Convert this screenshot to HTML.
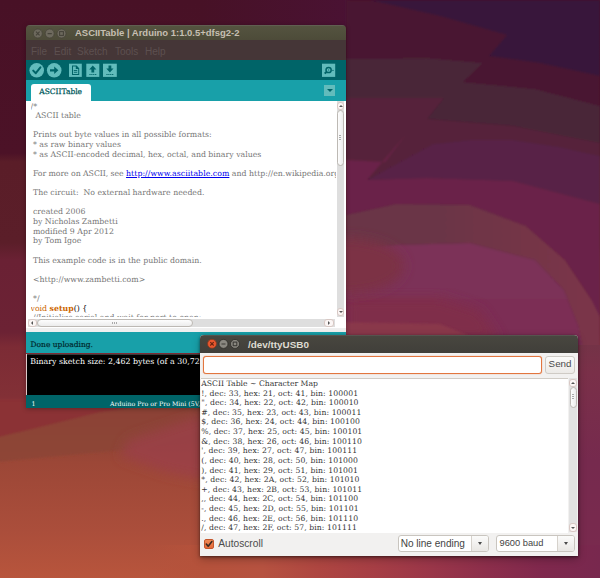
<!DOCTYPE html>
<html>
<head>
<meta charset="utf-8">
<title>ASCIITable | Arduino</title>
<style>
html,body{margin:0;padding:0;}
body{width:600px;height:578px;overflow:hidden;position:relative;background:#5a1c3c;font-family:"Liberation Sans","DejaVu Sans",sans-serif;}
#bg{position:absolute;left:0;top:0;width:600px;height:578px;}
.abs{position:absolute;}
/* ---------- Arduino window ---------- */
#ard{position:absolute;left:26px;top:25px;width:320px;height:383px;border-radius:4px 4px 0 0;overflow:hidden;box-shadow:0 1px 5px rgba(0,0,0,.28);}
#ard .title{position:absolute;left:0;top:0;width:320px;height:15.3px;background:linear-gradient(#66655a 0,#54533f 1.5px,#4d4b39 100%);}
#ard .title span{position:absolute;left:49px;top:2px;font:bold 9.47px/11px "Liberation Sans",sans-serif;color:#c6bfb2;white-space:nowrap;}
.wb{position:absolute;width:9px;height:9px;border-radius:50%;}
#ard .menu{position:absolute;left:0;top:15.3px;width:320px;height:19.7px;background:#453637;}
#ard .menu span{position:absolute;top:5.7px;font:10px/12px "Liberation Sans",sans-serif;color:#5d5050;white-space:nowrap;}
#ard .tool{position:absolute;left:0;top:35px;width:320px;height:20px;background:#006468;}
#ard .tabs{position:absolute;left:0;top:55px;width:320px;height:21px;background:#18a0a9;}
#ard .tab{position:absolute;left:5px;top:4px;width:60px;height:17px;background:#fff;border-radius:3px 3px 0 0;}
#ard .tab span{position:absolute;left:8.3px;top:3px;font:7.5px/10px "DejaVu Serif","Liberation Serif",serif;color:#00595c;white-space:nowrap;-webkit-text-stroke:.25px #00595c;}
#ard .ed{position:absolute;left:0;top:76px;width:320px;height:231px;background:#fff;}
#code{position:absolute;left:4.5px;top:0.6px;margin:0;font:7.8px/9.63px "DejaVu Serif","Liberation Serif",serif;color:#767676;white-space:pre;width:305px;height:215.5px;overflow:hidden;}
#code .k{color:#cc6600;}
#code .b{color:#cc6600;font-weight:bold;}
#code .n{color:#000;}
#code .u{color:#0000ee;text-decoration:underline;}
#ard .status{position:absolute;left:0;top:306.6px;width:320px;height:21.9px;background:#18a0a9;}
#ard .status span{position:absolute;left:4.6px;top:8px;font:7.5px/10px "DejaVu Serif","Liberation Serif",serif;color:#00292e;white-space:nowrap;-webkit-text-stroke:.2px #00292e;}
#ard .con{position:absolute;left:0;top:328.5px;width:320px;height:42px;background:#dcc9c9;}
#ard .con div{position:absolute;left:1.1px;top:0;width:318px;height:41.1px;background:#000;overflow:hidden;border-top:.6px solid #3a3a3a;}
#ard .con span{position:absolute;left:3.1px;top:2.8px;font:7.87px/10px "DejaVu Serif","Liberation Serif",serif;color:#fff;white-space:nowrap;}
#ard .foot{position:absolute;left:0;top:370.4px;width:320px;height:12.7px;background:#006468;}
#ard .foot span{position:absolute;top:4.3px;font:6.25px/8px "DejaVu Serif","Liberation Serif",serif;color:#fff;white-space:nowrap;}
/* ---------- Serial monitor ---------- */
#ser{position:absolute;left:200px;top:335px;width:378px;height:221px;border-radius:4px 4px 0 0;overflow:hidden;background:#f2f1f0;box-shadow:0 1px 3px rgba(0,0,0,.5),0 3px 9px rgba(0,0,0,.28);}
#ser .title{position:absolute;left:0;top:0;width:378px;height:17.6px;background:linear-gradient(#5c5b56 0,#48463f 1.5px,#403f3a 100%);}
#ser .title span{position:absolute;left:48px;top:3.5px;font:bold 9.9px/11px "Liberation Sans",sans-serif;color:#dfdbd2;white-space:nowrap;}
#ser .inp{position:absolute;left:3px;top:21.4px;width:337px;height:15.2px;border:1px solid #e2763f;border-radius:3px;background:#fff;box-shadow:0 0 1px #e2763f;}
#ser .send{position:absolute;left:345px;top:21px;width:28px;height:16px;border:1px solid #cfcbc5;border-radius:3px;background:linear-gradient(#fbfbfa,#eceae7);}
#ser .send span{position:absolute;left:2.6px;top:1.4px;font:9.8px/11px "Liberation Sans",sans-serif;color:#4a4a4a;}
#ser .ta{position:absolute;left:0.5px;top:42.5px;width:367px;height:154.3px;background:#fff;border-top:1px solid #d0ccc6;overflow:hidden;}
#out{position:absolute;left:0.8px;top:0.4px;margin:0;font:7.7px/9.63px "DejaVu Serif","Liberation Serif",serif;color:#383838;white-space:pre;}
#ser .lbl{position:absolute;left:18.2px;top:203.1px;font:10.2px/11px "Liberation Sans",sans-serif;color:#4c4c4c;}
.combo{position:absolute;top:200.2px;height:15px;border:1px solid #c9c5bf;border-radius:3px;background:#fff;overflow:hidden;}
.combo span{position:absolute;left:2.2px;top:1.6px;font:10.05px/11px "Liberation Sans",sans-serif;color:#444;white-space:nowrap;}
.combo i{position:absolute;right:0;top:0;width:16px;height:15px;background:linear-gradient(#fbfbfa,#e9e7e4);border-left:1px solid #d6d2cc;}
.combo i:after{content:"";position:absolute;left:6.2px;top:6.2px;border:2.7px solid transparent;border-top:3.3px solid #4a4a4a;border-bottom:0;}

#ard .dd{position:absolute;left:298.4px;top:5.3px;width:10.5px;height:10.3px;background:#62bcbc;}
#ard .dd:after{content:"";position:absolute;left:2.2px;top:3.8px;border:3px solid transparent;border-top:3.5px solid #006468;border-bottom:0;}
/* scrollbars */
.vtrack{position:absolute;background:#dedede;}
.thumb{position:absolute;background:linear-gradient(90deg,#fdfdfd,#ececec);border:1px solid #bdb9b4;border-radius:4px;box-sizing:border-box;}
.hthumb{position:absolute;background:linear-gradient(#fdfdfd,#ececec);border:1px solid #bdb9b4;border-radius:4px;box-sizing:border-box;}
.sbtn{position:absolute;background:#fbf6f5;border:1px solid #d8c8c4;border-radius:3px;box-sizing:border-box;}
.sbtn:after{content:"";position:absolute;}
.sbtn.up:after{left:1px;top:2px;border:2.2px solid transparent;border-bottom:2.8px solid #555;border-top:0;}
.sbtn.dn:after{left:1px;top:2.6px;border:2.2px solid transparent;border-top:2.8px solid #555;border-bottom:0;}
.sbtn.lf:after{left:2px;top:1.3px;border:2.2px solid transparent;border-right:2.8px solid #555;border-left:0;}
.sbtn.rt:after{left:3px;top:1.3px;border:2.2px solid transparent;border-left:2.8px solid #555;border-right:0;}
.grip{position:absolute;background:repeating-linear-gradient(#aaa 0 1px,transparent 1px 2px);}
.hgrip{position:absolute;background:repeating-linear-gradient(90deg,#aaa 0 1px,transparent 1px 2px);}
#ser .cb{position:absolute;left:4.3px;top:204.2px;width:10px;height:9.6px;border-radius:2px;background:linear-gradient(#ef8a56,#e46a38);border:1px solid #c4562c;box-sizing:border-box;}
</style>
</head>
<body>
<svg id="bg" width="600" height="578" viewBox="0 0 600 578">
<defs>
<linearGradient id="gl" x1="0" y1="0" x2="0" y2="1">
<stop offset="0" stop-color="#481126"/><stop offset="0.265" stop-color="#4c1227"/><stop offset="0.28" stop-color="#5a1d28"/><stop offset="0.42" stop-color="#5b1e29"/><stop offset="0.45" stop-color="#6a2134"/><stop offset="0.575" stop-color="#6c2234"/><stop offset="0.60" stop-color="#7c2b35"/><stop offset="0.685" stop-color="#823036"/><stop offset="0.70" stop-color="#8b3036"/><stop offset="0.72" stop-color="#8b3036"/><stop offset="0.76" stop-color="#8e4436"/><stop offset="0.80" stop-color="#9c4737"/><stop offset="0.92" stop-color="#ab4e3b"/><stop offset="1" stop-color="#b8553c"/>
</linearGradient>
<linearGradient id="gt" x1="0" y1="0" x2="1" y2="0">
<stop offset="0" stop-color="#471126"/><stop offset="1" stop-color="#4a1233"/>
</linearGradient>
<linearGradient id="gb" x1="0" y1="0" x2="1" y2="0">
<stop offset="0" stop-color="#b5523b" stop-opacity="0"/><stop offset="0.12" stop-color="#b5523b"/><stop offset="0.25" stop-color="#b65240"/><stop offset="0.375" stop-color="#ae4641"/><stop offset="0.5" stop-color="#a63e45"/><stop offset="0.625" stop-color="#9a3649"/><stop offset="0.75" stop-color="#8c2e4b"/><stop offset="0.875" stop-color="#7f284d"/><stop offset="1" stop-color="#78284e"/>
</linearGradient>
<linearGradient id="gr" x1="0" y1="0" x2="0" y2="1">
<stop offset="0" stop-color="#743347"/><stop offset="0.12" stop-color="#7a3049"/><stop offset="0.5" stop-color="#762a4e"/><stop offset="1" stop-color="#7a2a4e"/>
</linearGradient>
<linearGradient id="g7" gradientUnits="userSpaceOnUse" x1="440" y1="0" x2="580" y2="0"><stop offset="0" stop-color="#6b3447"/><stop offset="1" stop-color="#7a3448"/></linearGradient>
<clipPath id="cr"><rect x="340" y="-10" width="270" height="360"/></clipPath>
<filter id="bl" x="-5%" y="-5%" width="110%" height="110%"><feGaussianBlur stdDeviation="1.2"/></filter>
<filter id="bl2" x="-20%" y="-20%" width="140%" height="140%"><feGaussianBlur stdDeviation="6"/></filter>
</defs>
<rect width="600" height="578" fill="url(#gl)"/>
<rect x="200" y="0" width="150" height="26" fill="url(#gt)"/>
<g clip-path="url(#cr)"><g filter="url(#bl)">
<!-- right region bands -->
<path d="M346,0 L600,0 L600,578 L346,578 Z" fill="#4a1233"/>
<path d="M370,0 L440,16 L507,35 L489,56 L540,63 L600,76 L600,0 Z" fill="#38133a"/>
<path d="M346,59 L427,58 L483,63 L463,82 L535,89 L600,106 L600,146 L513,126 L427,119 L444,98 L346,98 Z" fill="#482637"/>
<path d="M346,98 L444,98 L427,119 L513,126 L600,143 L600,156 L560,147 L513,140 L470,140 L433,144 L367,180 L346,180 Z" fill="#56213a"/>
<path d="M367,180 L433,144 L470,140 L513,140 L560,147 L600,156 L600,204 L513,181 L427,178 Z" fill="#582347"/>
<path d="M346,160 L385,162 L407,133 L367,180 L427,178 L513,181 L600,204 L600,340 L591,299 L565,260 L526,226 L470,205 L396,204 L346,215 Z" fill="#6a2148"/>
<path d="M346,215 L396,204 L470,205 L526,226 L565,260 L591,299 L600,317 L600,350 L583,350 L578,325 L564,290 L535,260 L470,243 L396,245 L346,250 Z" fill="url(#g7)"/>
<path d="M346,250 L396,245 L470,243 L535,260 L564,290 L578,325 L583,350 L346,350 Z" fill="#7c3258"/>
<path d="M346,299 L567,299 L578,325 L583,350 L346,350 Z" fill="#7b2e54"/>
</g></g>
<path d="M346,297 L440,297 L480,310 L500,340 L346,340 Z" fill="#802d4a" filter="url(#bl2)" opacity=".9"/>
<path d="M340,322 L440,324 L480,340 L340,340 Z" fill="#8c3a4c" filter="url(#bl)" opacity=".8"/>
<ellipse cx="346" cy="266" rx="58" ry="28" fill="#7c3244" filter="url(#bl2)"/>
<g filter="url(#bl)">
<path d="M-5,400 L210,400 L210,396 L100,412 L-5,438 Z" fill="#8b3036"/>
<path d="M-5,438 L100,412 L210,396 L210,440 L120,450 L-5,462 Z" fill="#8c4435" opacity="0.85"/>
</g>
<path d="M128,440 L205,414 L205,480 L165,472 L120,456 Z" fill="#9b4148" filter="url(#bl2)" opacity="0.8"/>
<rect x="570" y="345" width="30" height="233" fill="url(#gr)"/>
<rect x="150" y="545" width="450" height="33" fill="url(#gb)"/>
</svg>

<div id="ard">
  <div class="title">
    <svg width="48" height="15" viewBox="0 0 48 15" style="position:absolute;left:0;top:0">
      <g fill="#6d695d" stroke="#48453a" stroke-width="0.8"><circle cx="11.8" cy="8.5" r="4.5"/><circle cx="23.7" cy="8.5" r="4.5"/><circle cx="35.5" cy="8.5" r="4.5"/></g>
      <g stroke="#46433a" stroke-width="1.1" fill="none"><path d="M10,6.7 L13.6,10.3 M13.6,6.7 L10,10.3"/><path d="M21.6,8.6 H25.8"/><rect x="33.6" y="6.6" width="3.8" height="3.8"/></g>
    </svg>
    <span>ASCIITable | Arduino 1:1.0.5+dfsg2-2</span>
  </div>
  <div class="menu">
    <span style="left:5px">File</span><span style="left:28px">Edit</span><span style="left:51px">Sketch</span><span style="left:89px">Tools</span><span style="left:119px">Help</span>
  </div>
  <div class="tool"><svg width="320" height="20" viewBox="0 0 320 20" style="position:absolute;left:0;top:0">
<g fill="#62bcbc">
<circle cx="10.7" cy="10.3" r="7.3"/><circle cx="28.2" cy="10.3" r="7.3"/>
<rect x="43" y="3.7" width="12.8" height="13.2"/><rect x="60.3" y="3.7" width="13" height="13.2"/><rect x="77" y="3.7" width="13.8" height="13.2"/>
<rect x="296" y="3.7" width="13.2" height="13.2"/>
</g>
<g fill="none" stroke="#006468" stroke-width="2" stroke-linecap="round" stroke-linejoin="round">
<path d="M7.2,10.6 L9.8,13.2 L14.4,7.4"/>
</g>
<g fill="#006468">
<path d="M24,9.2 h4.2 v-2.6 l4.2,3.7 l-4.2,3.7 v-2.6 h-4.2 z"/>
<path d="M46,5.6 h4.6 l2.6,2.6 v6.8 h-7.2 z M47,6.6 v7.4 h5.2 v-5 h-2.4 v-2.4 z" fill-rule="evenodd"/>
<rect x="47.8" y="10" width="3.4" height="0.9"/><rect x="47.8" y="11.8" width="3.4" height="0.9"/>
<path d="M66.8,5.6 l3.6,3.8 h-2.2 v3 h-2.8 v-3 h-2.2 z"/>
<rect x="63.4" y="14" width="1.2" height="1"/><rect x="65.3" y="14" width="1.2" height="1"/><rect x="67.2" y="14" width="1.2" height="1"/><rect x="69.1" y="14" width="1.2" height="1"/>
<path d="M83.9,12.4 l3.6,-3.8 h-2.2 v-3 h-2.8 v3 h-2.2 z"/>
<rect x="80.4" y="14" width="1.2" height="1"/><rect x="82.3" y="14" width="1.2" height="1"/><rect x="84.2" y="14" width="1.2" height="1"/><rect x="86.1" y="14" width="1.2" height="1"/>
</g>
<g fill="none" stroke="#006468" stroke-width="1.5">
<circle cx="302.6" cy="10" r="2.6"/><path d="M300.7,11.9 L298.6,13.6" stroke-width="1.9"/>
</g>
<rect x="302.1" y="9.5" width="1" height="1" fill="#006468"/>
<rect x="306.3" y="9.9" width="1.3" height="1" fill="#006468"/>
</svg></div>
  <div class="tabs"><div class="tab"><span>ASCIITable</span></div><div class="dd"></div></div>
  <div class="ed">
<pre id="code">/*
  ASCII table
 
 Prints out byte values in all possible formats:  
 * as raw binary values
 * as ASCII-encoded decimal, hex, octal, and binary values
 
<span style="letter-spacing:-.07px"> For more on ASCII, see </span><span class="u" style="letter-spacing:.03px">http://www.asciitable.com</span> and http://en.wikipedia.org/wiki/ASCII
 
 The circuit:  No external hardware needed.
 
 created 2006
 by Nicholas Zambetti 
 modified 9 Apr 2012
 by Tom Igoe
 
 This example code is in the public domain.

 &lt;http://www.zambetti.com&gt; 
 
 */
<span class="k">void</span> <span class="b">setup</span><span class="n">() { </span>
 //Initialize serial and wait for port to open:
</pre>
    <div class="vtrack" style="left:310.6px;top:0;width:7.6px;height:216px"></div>
    <div class="sbtn up" style="left:310.6px;top:0.5px;width:7.6px;height:8.2px"></div>
    <div class="thumb" style="left:310.7px;top:8.6px;width:7.3px;height:56.4px"></div>
    <div class="grip" style="left:313px;top:34px;width:2.4px;height:5px"></div>
    <div class="sbtn dn" style="left:310.6px;top:206.8px;width:7.6px;height:8.4px"></div>
    <div class="vtrack" style="left:1.5px;top:218px;width:307px;height:8px;background:#dedede"></div>
    <div class="sbtn lf" style="left:1.8px;top:217.8px;width:9px;height:8.4px"></div>
    <div class="hthumb" style="left:10.6px;top:218.2px;width:156px;height:7.6px"></div>
    <div class="hgrip" style="left:85.5px;top:221px;width:5px;height:2.4px"></div>
    <div class="sbtn rt" style="left:298px;top:217.8px;width:9.5px;height:8.4px"></div>
    <div class="abs" style="left:0;top:227px;width:320px;height:4px;background:#efefef"></div>
  </div>
  <div class="status"><span>Done uploading.</span></div>
  <div class="con"><div><span>Binary sketch size: 2,462 bytes (of a 30,720 byte maximum)</span></div></div>
  <div class="foot"><span style="left:5.5px">1</span><span style="left:84px">Arduino Pro or Pro Mini (5V, 16 MHz) w/ ATmega328 on /dev/ttyUSB0</span></div>
</div>

<div id="ser">
  <div class="title">
    <svg width="48" height="18" viewBox="0 0 48 18" style="position:absolute;left:0;top:0">
      <circle cx="12" cy="8.8" r="4.5" fill="#e9572e" stroke="#7e3a22" stroke-width="0.8"/>
      <g fill="#8a8880" stroke="#2e2d2a" stroke-width="0.8"><circle cx="23.5" cy="8.9" r="4.5"/><circle cx="35" cy="8.9" r="4.5"/></g>
      <g stroke="#3c3b37" stroke-width="1.1" fill="none"><path d="M10.3,7.1 L13.7,10.5 M13.7,7.1 L10.3,10.5" stroke="#6b2410"/><path d="M21.5,9 H25.5"/><rect x="33.2" y="7.1" width="3.6" height="3.6"/></g>
    </svg>
    <span>/dev/ttyUSB0</span>
  </div>
  <div class="inp"></div>
  <div class="send"><span>Send</span></div>
  <div class="ta">
<pre id="out">ASCII Table ~ Character Map
<span style="letter-spacing:.083px">!, dec: 33, hex: 21, oct: 41, bin: 100001
", dec: 34, hex: 22, oct: 42, bin: 100010
#, dec: 35, hex: 23, oct: 43, bin: 100011
$, dec: 36, hex: 24, oct: 44, bin: 100100
%, dec: 37, hex: 25, oct: 45, bin: 100101
&amp;, dec: 38, hex: 26, oct: 46, bin: 100110
', dec: 39, hex: 27, oct: 47, bin: 100111
(, dec: 40, hex: 28, oct: 50, bin: 101000
), dec: 41, hex: 29, oct: 51, bin: 101001
*, dec: 42, hex: 2A, oct: 52, bin: 101010
+, dec: 43, hex: 2B, oct: 53, bin: 101011
,, dec: 44, hex: 2C, oct: 54, bin: 101100
-, dec: 45, hex: 2D, oct: 55, bin: 101101
., dec: 46, hex: 2E, oct: 56, bin: 101110
/, dec: 47, hex: 2F, oct: 57, bin: 101111
</span></pre>
  </div>
  <div class="vtrack" style="left:369.3px;top:43px;width:8px;height:154px;background:#e2e2e2"></div>
  <div class="sbtn up" style="left:369.3px;top:43.5px;width:8px;height:8.4px"></div>
  <div class="thumb" style="left:369.6px;top:51.5px;width:7.4px;height:21.5px"></div>
  <div class="grip" style="left:372px;top:59px;width:2.4px;height:5px"></div>
  <div class="sbtn dn" style="left:369.3px;top:188px;width:8px;height:8.6px"></div>
  <div class="cb"><svg width="10" height="10" viewBox="0 0 10 10" style="position:absolute;left:-1px;top:-1px"><path d="M2.3,5 L4.2,7.2 L7.9,2.6" fill="none" stroke="#3a2a22" stroke-width="1.6" stroke-linecap="round" stroke-linejoin="round"/></svg></div>
  <div class="lbl">Autoscroll</div>
  <div class="combo" style="left:197.5px;width:89.7px"><span>No line ending</span><i></i></div>
  <div class="combo" style="left:295.5px;width:77px"><span style="font-size:9.3px;left:3px;top:1.9px">9600 baud</span><i></i></div>
</div>
</body>
</html>
